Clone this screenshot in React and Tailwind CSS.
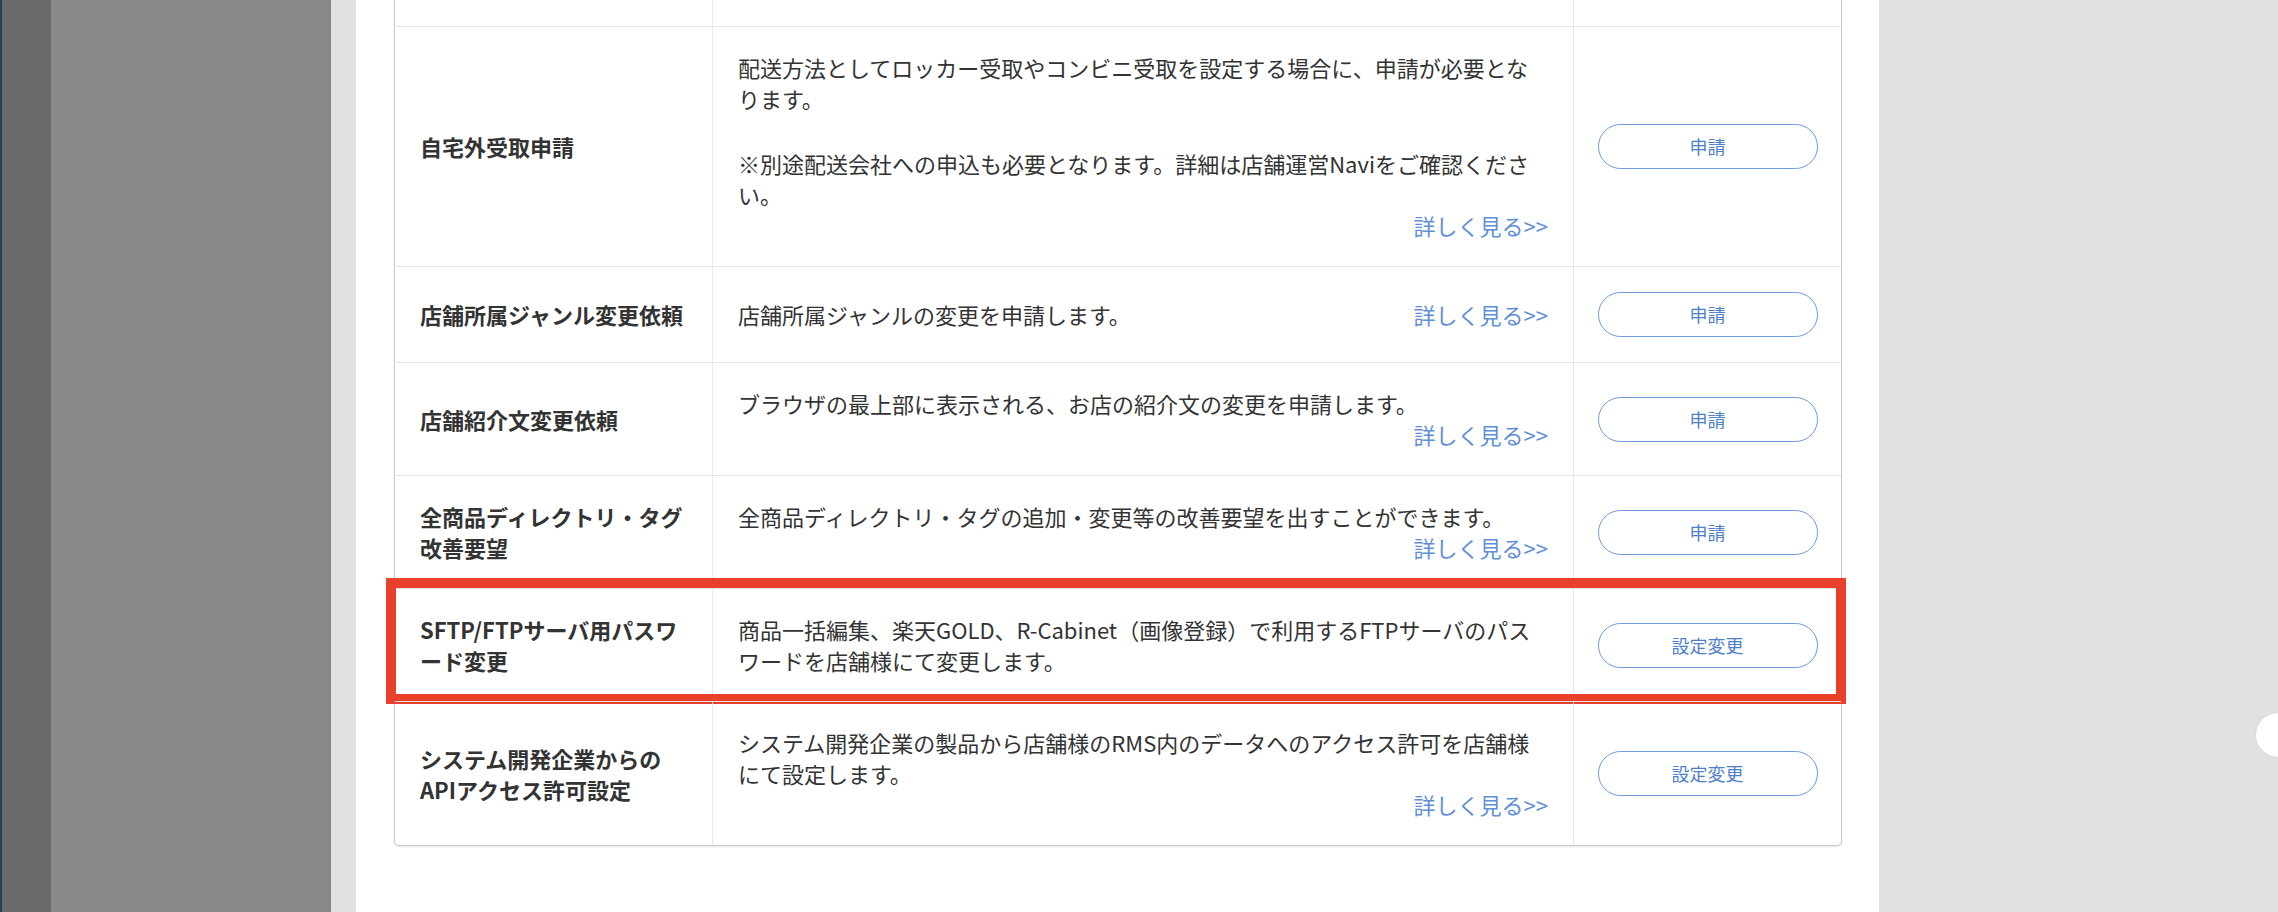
import React from 'react';

const font = { fontFamily: '"Noto Sans CJK JP", "Noto Sans", sans-serif' };

const rows = [
    {
        title: ['自宅外受取申請'],
        body: [
            ['配送方法としてロッカー受取やコンビニ受取を設定する場合に、申請が必要とな', 'ります。'],
            ['※別途配送会社への申込も必要となります。詳細は店舗運営Naviをご確認くださ', 'い。'],
        ],
        more: true,
        action: '申請',
    },
    {
        title: ['店舗所属ジャンル変更依頼'],
        body: [['店舗所属ジャンルの変更を申請します。']],
        more: 'inline',
        action: '申請',
    },
    {
        title: ['店舗紹介文変更依頼'],
        body: [['ブラウザの最上部に表示される、お店の紹介文の変更を申請します。']],
        more: true,
        action: '申請',
    },
    {
        title: ['全商品ディレクトリ・タグ', '改善要望'],
        body: [['全商品ディレクトリ・タグの追加・変更等の改善要望を出すことができます。']],
        more: true,
        action: '申請',
    },
    {
        title: ['SFTP/FTPサーバ用パスワ', 'ード変更'],
        body: [['商品一括編集、楽天GOLD、R-Cabinet（画像登録）で利用するFTPサーバのパス', 'ワードを店舗様にて変更します。']],
        more: false,
        action: '設定変更',
        highlight: true,
    },
    {
        title: ['システム開発企業からの', 'APIアクセス許可設定'],
        body: [['システム開発企業の製品から店舗様のRMS内のデータへのアクセス許可を店舗様', 'にて設定します。']],
        more: true,
        action: '設定変更',
    },
];

const MoreLink = () => (
    <a className="text-[#5f8fd4] whitespace-nowrap cursor-pointer">詳しく見る&gt;&gt;</a>
);

const Row = ({ row }) => (
    <div className="relative flex border-t border-[#e4e4e4]">
        {/* 項目名 */}
        <div className="w-[317px] pl-[25px] pr-[20px] py-[25px] flex flex-col justify-center text-[22px] leading-[31px] font-bold text-[#333]">
            {row.title.map((t) => (
                <span key={t} className="whitespace-nowrap">{t}</span>
            ))}
        </div>

        {/* 説明 */}
        <div className="w-[861px] border-l border-[#e8e8e8] px-[25px] py-[25px] flex flex-col justify-center text-[22px] leading-[31px] text-[#333]">
            {row.more === 'inline' ? (
                <div className="flex justify-between">
                    <span className="whitespace-nowrap">{row.body[0][0]}</span>
                    <MoreLink />
                </div>
            ) : (
                row.body.map((para, i) => (
                    <div key={i} className={i > 0 ? 'mt-[34px]' : ''}>
                        {para.map((line) => (
                            <div key={line} className="whitespace-nowrap">{line}</div>
                        ))}
                    </div>
                ))
            )}
            {row.more === true && (
                <div className="text-right">
                    <MoreLink />
                </div>
            )}
        </div>

        {/* ボタン */}
        <div className="flex-1 border-l border-[#e8e8e8] py-[25px] flex items-center justify-center">
            <button className="w-[220px] h-[45px] rounded-full border-[1.5px] border-[#6d9ad8] bg-white text-[18px] text-[#4f80c9]">
                {row.action}
            </button>
        </div>

        {row.highlight && (
            <div className="absolute -left-[9px] -right-[5px] -top-[11px] -bottom-[3px] border-[10px] border-[#e8402a] pointer-events-none" />
        )}
    </div>
);

const App = () => {
    return (
        <div className="w-full h-[912px] overflow-hidden flex bg-[#e1e1e1]" style={font}>
            <div className="w-[51px] shrink-0 bg-[#6a6a6a] border-l-2 border-[#2f3e52]" />
            <div className="w-[280px] shrink-0 bg-[#888888]" />
            <div className="w-[25px] shrink-0 bg-[#e1e1e1]" />

            <div className="w-[1523px] shrink-0 bg-white px-[38px]">
                <div className="-mt-[40px] w-[1448px] bg-white border border-[#c9c9c9] rounded-[5px] shadow-[0_1px_2px_rgba(0,0,0,0.12)]">
                    {/* 上で切れている行 */}
                    <div className="flex h-[65px]">
                        <div className="w-[317px]" />
                        <div className="w-[861px] border-l border-[#e8e8e8]" />
                        <div className="flex-1 border-l border-[#e8e8e8]" />
                    </div>
                    {rows.map((row) => (
                        <Row key={row.title.join('')} row={row} />
                    ))}
                </div>
            </div>

            <div className="relative flex-1 bg-[#e1e1e1]">
                <div className="absolute -right-[22px] top-[713px] w-[44px] h-[44px] rounded-full bg-white shadow-[0_0_2px_rgba(0,0,0,0.1)]" />
            </div>
        </div>
    );
};

export default App;
